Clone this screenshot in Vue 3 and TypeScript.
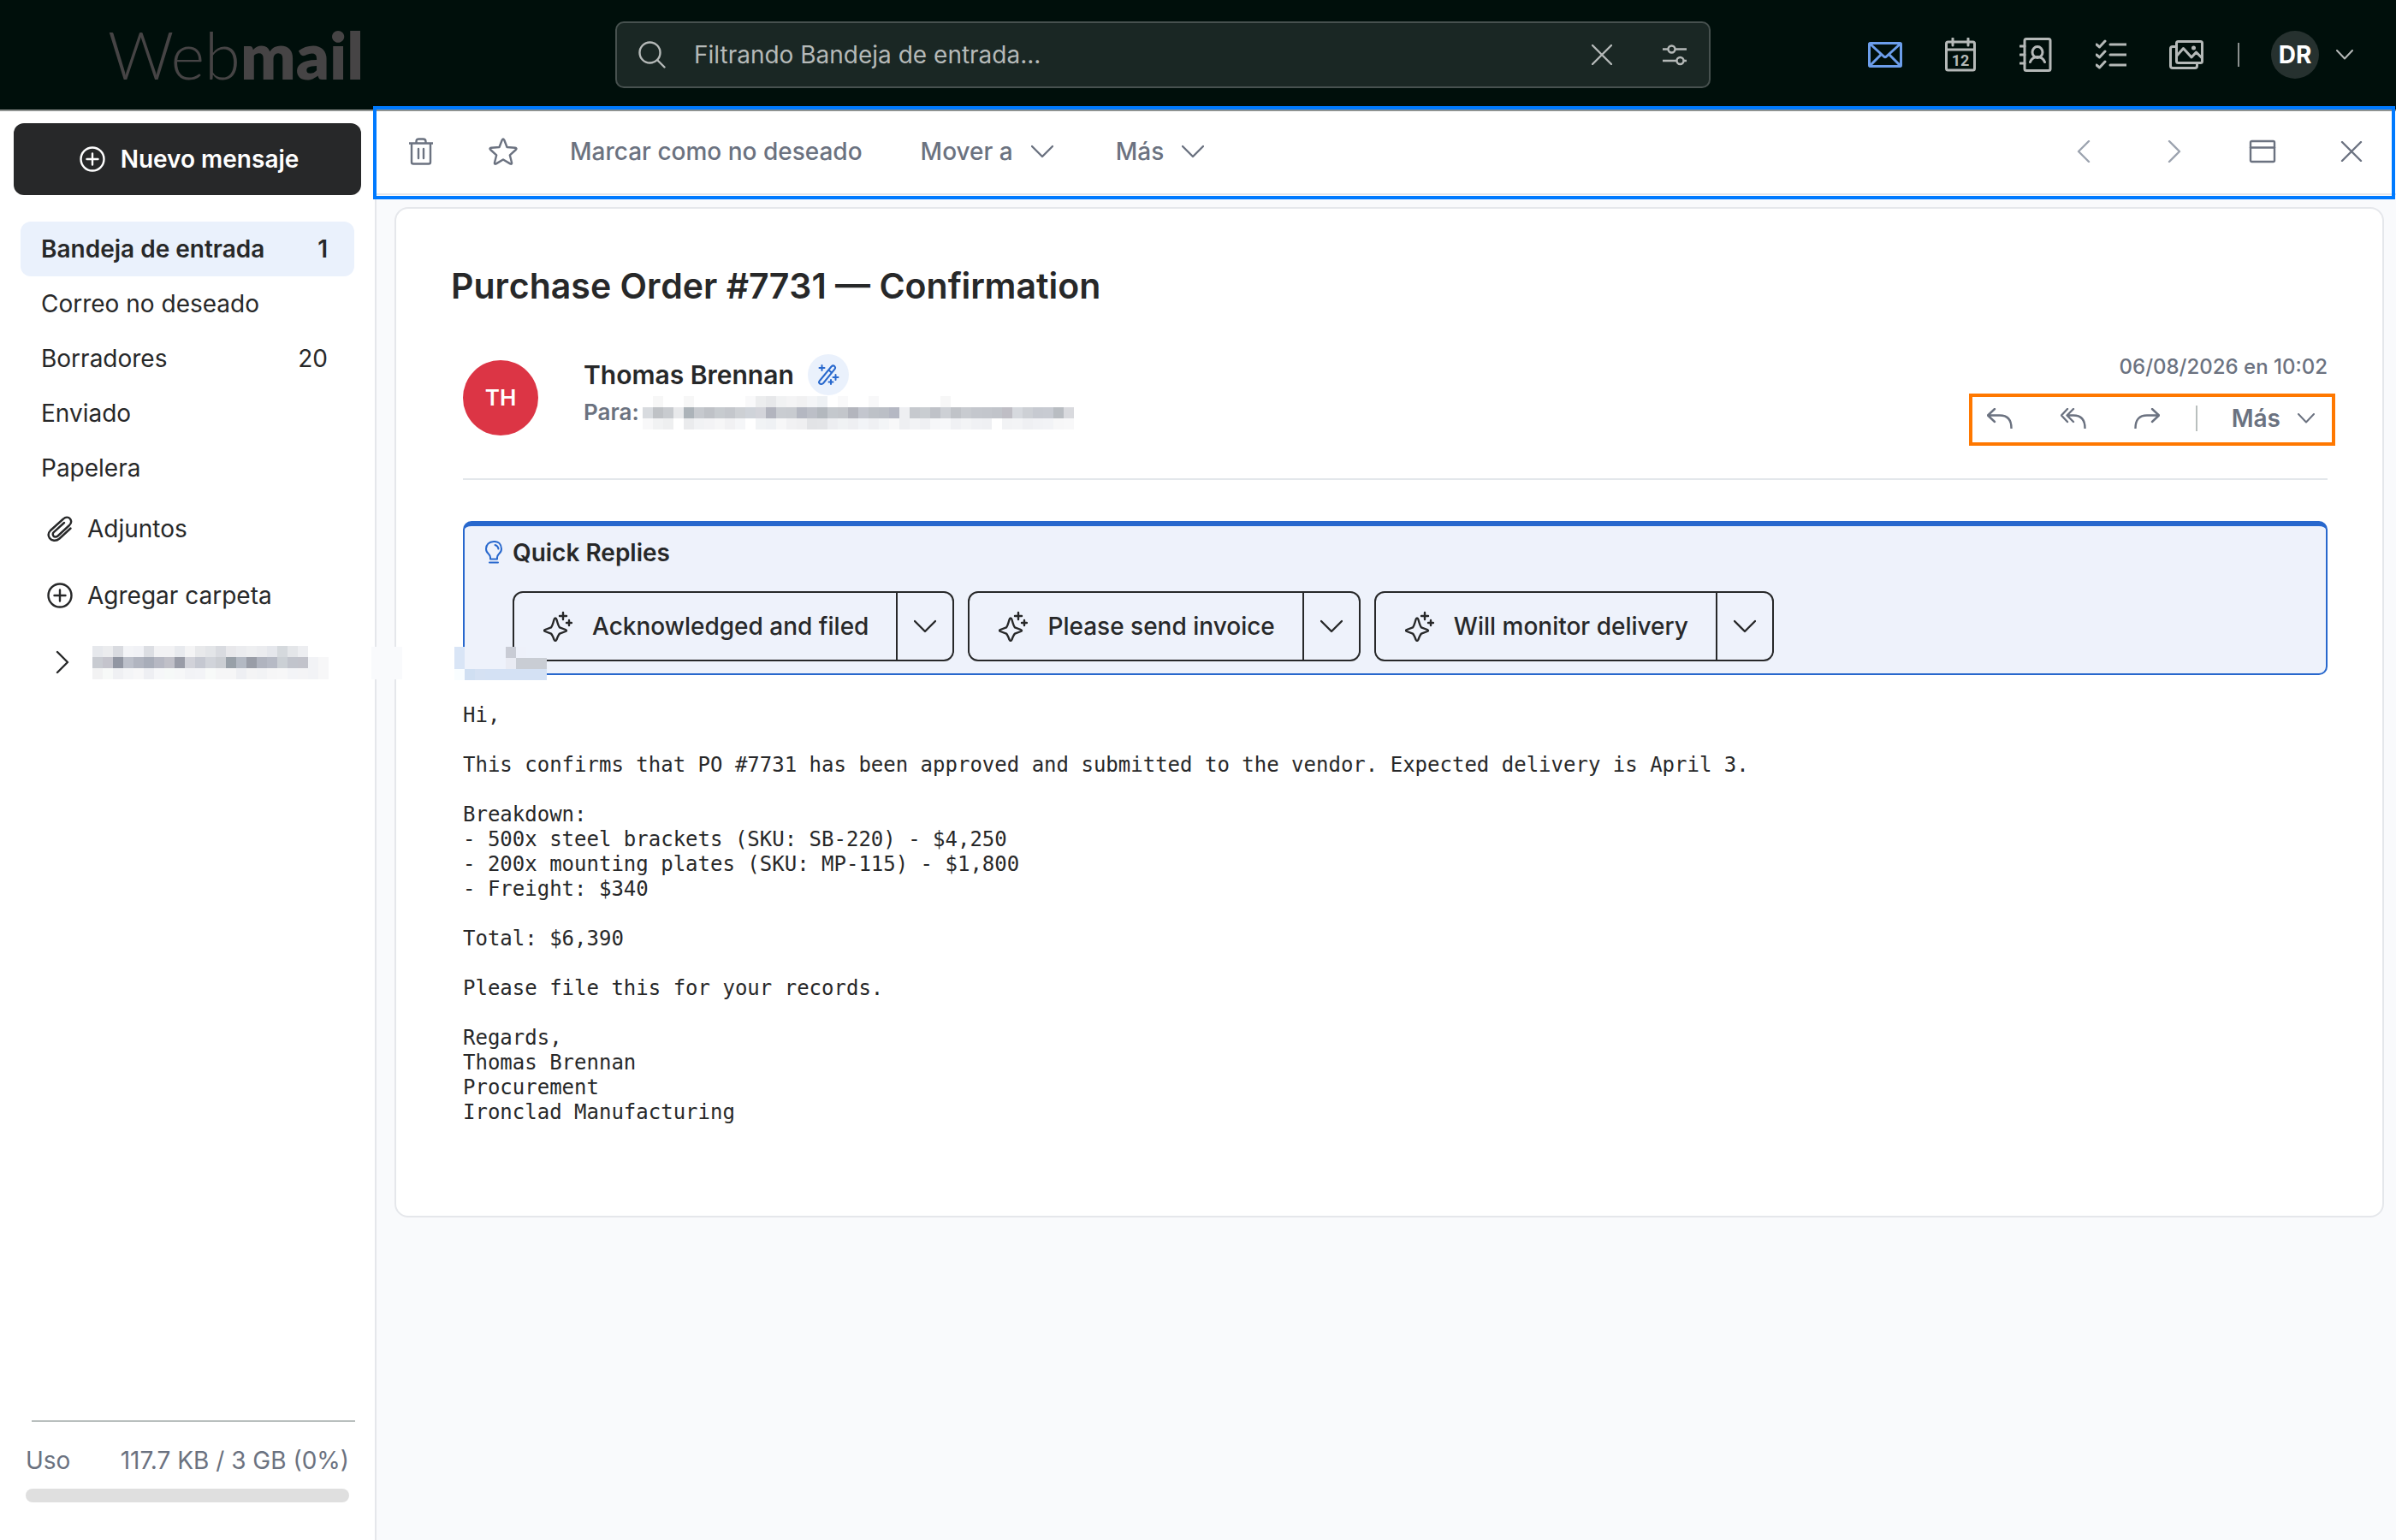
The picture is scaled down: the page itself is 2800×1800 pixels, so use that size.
<script setup lang="ts">
interface Folder {
  name: string
  count?: number
  active?: boolean
}

const folders: Folder[] = [
  { name: 'Bandeja de entrada', count: 1, active: true },
  { name: 'Correo no deseado' },
  { name: 'Borradores', count: 20 },
  { name: 'Enviado' },
  { name: 'Papelera' },
]

const quickReplies: string[] = ['Acknowledged and filed', 'Please send invoice', 'Will monitor delivery']

const message = `Hi,

This confirms that PO #7731 has been approved and submitted to the vendor. Expected delivery is April 3.

Breakdown:
- 500x steel brackets (SKU: SB-220) - $4,250
- 200x mounting plates (SKU: MP-115) - $1,800
- Freight: $340

Total: $6,390

Please file this for your records.

Regards,
Thomas Brennan
Procurement
Ironclad Manufacturing`

// Pixelated blocks that hide private addresses: one colour per 12px cell, row by row.
const accountMask: string[][] = [
  'e6e8ec ebecee d9dbe0 f3f4f7 f1f2f6 dcdee3 f2f2f4 f2f2f4 e8eaee f4f4f5 e8e9eb e3e5e8 d9dbe0 e8e8eb ebecef eeeff1 ebecef e5e7ec d5d9dd e4e6e9 edeef1 ffffff ffffff',
  'c8cbd1 c4c4cc 9196a2 bcc0ca b1b5c0 a8adb9 b6b8c3 c0c0c8 999ca7 d1d2d9 c5c8d1 d1d4da cbced3 98a0a8 b3b9c3 999da7 b0b4bf b6bac5 cbd0d5 c1c4cc c2c3cb f2f3f6 f7f7f8',
  'f2f2f3 f7f9f8 eff0f3 f4f5f7 f7f7f8 eeeff3 f6f7f9 f6f9f8 f6f7f8 f2f3f6 f3f4f7 f8faf9 f6f6f7 f6f6f7 eeeff3 f4f4f5 f2f3f5 f6f6f7 f7f7f8 f3f4f7 f4f4f6 f2f3f6 f7f7f8',
].map((row) => row.split(' '))

const recipientMask: string[][] = [
  'ffffff f7f7f7 ffffff ffffff f7f7f7 ffffff ffffff ffffff ffffff ffffff f9f9fa ecedee e7e8ea f1f2f3 f4f4f5 f1f1f2 f4f5f7 eef1f4 ffffff f9f9fa ffffff ffffff f8f8f9 ffffff ffffff ffffff ffffff ffffff ffffff f7f7f7 ffffff ffffff ffffff ffffff ffffff ffffff ffffff ffffff ffffff ffffff ffffff ffffff',
  'd8dbdf bfc2c6 c8cbcf e8e9eb acb3b9 c6c9ce bfc2c7 c7cbcf c4c7cc cdd0d4 cfd3d9 d3d4da b2b4be c9ccd1 c8cbd0 b4b7c1 bcbfc7 b3b8be c4c8cd c3c6cb b3b5bd c3c6ce bdc1c7 bbbfc6 b5b8c3 eeeff2 c6c9ce c9cdd1 bfc2c8 cdd0d5 c0c3c8 c8cbd0 c4c7cd c3c6cc c1c4ca bfbec5 d6d9de cdd0d5 c7cad1 c8cbd2 b9bdc2 d9dade',
  'f8f8f9 f1f2f3 eeeff0 ffffff eaebed f1f2f4 f3f3f5 f6f6f7 f1f1f3 f5f6f8 ffffff f1f3f5 eff1f4 f7f7f8 f1f1f3 efeff1 e2e3e6 e3e4e7 edeef1 f0f2f4 eeeff2 f2f4f7 eff0f3 f3f5f7 f8f8f9 eeeff2 f2f3f5 eff0f3 f6f7f9 f7f8fa f0f1f4 f3f4f6 f0f1f4 eff0f3 ffffff f2f3f5 f3f4f6 eff0f3 f1f2f5 f2f3f6 f7f7f8 f8f8f9',
].map((row) => row.split(' '))

const panelMask: string[][] = [
  'd9e5f6 eef2fb eef2fb eef2fb eef2fb c9ccd5 eef1fa eef2fb eef2fb',
  'd9e5f6 eef2fb eef2fb eef2fb eef2fb e9ebf3 c9cdd4 c9cdd4 c9cdd4',
  'f9fdff d0dff2 d5e1f3 d4e1f4 d4e1f4 d4e1f4 d4e1f4 d4e1f4 d4e1f4',
].map((row) => row.split(' '))
</script>

<template>
  <div class="app">
    <header class="topbar">
      <a class="brand" href="#">Web<b>mail</b></a>

      <form class="search" role="search" @submit.prevent>
        <svg class="stroke" width="32" height="32" viewBox="0 0 32 32" aria-hidden="true">
          <circle cx="13.5" cy="13.5" r="12" /><path d="M22 22l8.5 8.5" />
        </svg>
        <input type="search" aria-label="Buscar" placeholder="Filtrando Bandeja de entrada..." />
        <button type="button" aria-label="Borrar">
          <svg class="stroke" width="24" height="24" viewBox="0 0 24 24"><path d="M1 1l22 22M23 1L1 23" /></svg>
        </button>
        <button type="button" aria-label="Filtros">
          <svg class="stroke" width="28" height="28" viewBox="0 0 28 28">
            <path d="M0 7.500h6M15 7.500h13M0 21h16M25 21h3" /><circle cx="10.500" cy="7.500" r="4" /><circle cx="20.500" cy="21" r="4" />
          </svg>
        </button>
      </form>

      <nav class="apps" aria-label="Aplicaciones">
        <a href="#" class="app-link current" aria-label="Correo">
          <svg width="40" height="32" viewBox="0 0 40 32"><rect x="1.500" y="2.500" width="37" height="27" rx="1.500" /><path d="M2 3l16.500 15q1.500 1.400 3 0L38 3M2 29l13.500-13.500M38 29L24.500 15.500" /></svg>
        </a>
        <a href="#" class="app-link" aria-label="Calendario">
          <svg width="36" height="40" viewBox="0 0 36 40"><rect x="1.500" y="5" width="33" height="33" rx="2" /><path d="M1.500 14h33M9 1v8M27 1v8" /><text x="18" y="33" text-anchor="middle">12</text></svg>
        </a>
        <a href="#" class="app-link" aria-label="Contactos">
          <svg width="38" height="40" viewBox="0 0 38 40"><rect x="6" y="1.500" width="30" height="37" rx="2" /><path d="M1 10h5M1 20h5M1 30h5M12.500 28.500q2.500-6 8.500-6t8.500 6" /><ellipse cx="21" cy="17" rx="6" ry="6.500" /></svg>
        </a>
        <a href="#" class="app-link" aria-label="Tareas">
          <svg width="36" height="36" viewBox="0 0 36 36"><path d="M1 6l3.500 3L11 2M1 18l3.500 3L11 14M1 30l3.500 3L11 26M17 6h19M17 18h19M17 30h19" /></svg>
        </a>
        <a href="#" class="app-link" aria-label="Imágenes">
          <svg width="40" height="36" viewBox="0 0 40 36"><rect x="8.500" y="2.500" width="30" height="25" rx="2" /><path d="M8 8.500H4q-2.500 0-2.500 2.500v20q0 2.500 2.500 2.500h26q2.500 0 2.500-2.500v-3M9 19l7.500-8.500L26 21l5.500-6L38.500 22" /><circle class="dot" cx="28.500" cy="10" r="2.500" /></svg>
        </a>
        <span class="apps-rule"></span>
        <button type="button" class="account" aria-label="Cuenta">
          <span class="account-initials">DR</span>
          <svg class="stroke thin" width="20" height="12" viewBox="0 0 20 12"><path d="M1 1l9 9.500L19 1" /></svg>
        </button>
      </nav>
    </header>

    <div class="body">
      <aside class="sidebar">
        <button type="button" class="compose">
          <svg class="stroke" width="30" height="30" viewBox="0 0 30 30" aria-hidden="true"><circle cx="15" cy="15" r="13.500" /><path d="M15 8.500v13M8.500 15h13" /></svg>
          Nuevo mensaje
        </button>

        <nav class="folders" aria-label="Carpetas">
          <a v-for="folder in folders" :key="folder.name" href="#" class="folder" :class="{ active: folder.active }">
            <span>{{ folder.name }}</span><span v-if="folder.count">{{ folder.count }}</span>
          </a>
        </nav>

        <div class="extras">
          <a href="#" class="extra">
            <svg class="stroke" width="30" height="30" viewBox="0 0 30 30" aria-hidden="true"><path d="M27.500 14.500L14.500 26.500C10.500 30 5 29 3 26 1 23 1.500 19.500 4 17L19 3.500C21.500 1 25 1 27 3.500c1.800 2.500 1 5.500-1 7.500L12.500 23.500c-1.500 1.300-4 1.500-5 0s-.8-3.500.5-4.700L20 8" /></svg>
            Adjuntos
          </a>
          <button type="button" class="extra">
            <svg class="stroke" width="30" height="30" viewBox="0 0 30 30" aria-hidden="true"><circle cx="15" cy="15" r="13.500" /><path d="M15 8.500v13M8.500 15h13" /></svg>
            Agregar carpeta
          </button>
          <button type="button" class="extra" aria-label="Cuenta">
            <svg class="stroke" width="30" height="30" viewBox="0 0 30 30" aria-hidden="true"><path d="M12 3l12 12-12 12" /></svg>
            <span class="mask">
              <span v-for="(row, r) in accountMask" :key="r" class="mask-row">
                <i v-for="(c, k) in row" :key="k" :style="{ background: '#' + c }"></i>
              </span>
            </span>
          </button>
        </div>

        <div class="usage">
          <label class="usage-label" for="quota"><span>Uso</span><span>117.7 KB / 3 GB (0%)</span></label>
          <progress id="quota" max="100" value="0"></progress>
        </div>
        <span class="edge-mask"></span>
      </aside>

      <main class="main">
        <div class="toolbar" role="toolbar" aria-label="Acciones">
          <button type="button" class="tool trash" aria-label="Eliminar">
            <svg class="stroke" width="28" height="32" viewBox="0 0 28 32"><path d="M0 6.500h28M3 6.500v22q0 2 2 2h18q2 0 2-2v-22M8.500 6V4.500q0-3 3-3h5q3 0 3 3V6M11 13v11M17 13v11" /></svg>
          </button>
          <button type="button" class="tool star" aria-label="Destacar">
            <svg class="stroke" width="34" height="32" viewBox="0 0 34 32"><path d="M15.800 2.500q1.200-2 2.400 0L21.500 11l9.500.8q2.500.4.800 2.200l-7 6.300 2.200 8.700q.4 2.500-1.800 1.400L17 25.500l-8.200 4.900Q6.600 31.500 7 29l2.200-8.700L2.200 14q-1.700-1.800.8-2.200l9.500-.8z" /></svg>
          </button>
          <button type="button" class="tool junk">Marcar como no deseado</button>
          <button type="button" class="tool menu">
            Mover a
            <svg class="stroke" width="26" height="16" viewBox="0 0 26 16"><path d="M1 2l12 12L25 2" /></svg>
          </button>
          <button type="button" class="tool menu">
            Más
            <svg class="stroke" width="26" height="16" viewBox="0 0 26 16"><path d="M1 2l12 12L25 2" /></svg>
          </button>
          <div class="toolbar-end">
            <button type="button" class="tool muted" aria-label="Anterior">
              <svg class="stroke" width="32" height="26" viewBox="0 0 32 26"><path d="M21 1L9 13l12 12" /></svg>
            </button>
            <button type="button" class="tool muted" aria-label="Siguiente">
              <svg class="stroke" width="32" height="26" viewBox="0 0 32 26"><path d="M11 1l12 12-12 12" /></svg>
            </button>
            <button type="button" class="tool" aria-label="Abrir en ventana">
              <svg class="stroke" width="32" height="28" viewBox="0 0 32 28"><rect x="2" y="2" width="28" height="24" rx="1.500" /><path d="M2 9.500h28" /></svg>
            </button>
            <button type="button" class="tool" aria-label="Cerrar">
              <svg class="stroke" width="32" height="24" viewBox="0 0 32 24"><path d="M5 1l22 22M27 1L5 23" /></svg>
            </button>
          </div>
          <span class="toolbar-highlight"></span>
        </div>

        <article class="card">
          <h1>Purchase Order #7731 — Confirmation</h1>

          <div class="sender">
            <span class="avatar">TH</span>
            <div class="sender-info">
              <div class="sender-name">
                Thomas Brennan
                <span class="badge">
                  <svg class="stroke thin" width="26" height="24" viewBox="0 0 26 24"><path d="M2.500 19.500L16.500 2.500q2-2 3.800-.4 1.600 1.600 0 3.600L7 22q-2 1.800-4 .4-1.700-1.400-.5-2.900zM13.500 6.500l3.500 3.200M5.500 1v6M2.500 4h6M21.500 12v6M18.500 15h6M16 18v5M13.500 20.500h5" /></svg>
                </span>
              </div>
              <div class="recipient">
                Para:
                <span class="mask">
                  <span v-for="(row, r) in recipientMask" :key="r" class="mask-row">
                    <i v-for="(c, k) in row" :key="k" :style="{ background: '#' + c }"></i>
                  </span>
                </span>
              </div>
            </div>
            <div class="sender-side">
              <time datetime="2026-08-06T10:02">06/08/2026 en 10:02</time>
              <div class="reply-tools">
                <button type="button" class="reply" aria-label="Responder">
                  <svg class="stroke" width="30" height="24" viewBox="0 0 30 24"><path d="M9 1L1 8.500 9 16M1 8.500h14q13.500 0 13.500 15" /></svg>
                </button>
                <button type="button" class="reply" aria-label="Responder a todos">
                  <svg class="stroke" width="30" height="24" viewBox="0 0 30 24"><path d="M8 1L1 8.500 8 16M15 1L7.500 8.500 15 16M8 8.500h7q13.500 0 13.500 15" /></svg>
                </button>
                <button type="button" class="reply" aria-label="Reenviar">
                  <svg class="stroke" width="30" height="24" viewBox="0 0 30 24"><path d="M21 1l8 7.500-8 7.500M29 8.500H15Q1.500 8.500 1.500 23.500" /></svg>
                </button>
                <span class="reply-rule"></span>
                <button type="button" class="reply-more">
                  Más
                  <svg class="stroke thin" width="20" height="12" viewBox="0 0 20 12"><path d="M1 1l9 9.500L19 1" /></svg>
                </button>
              </div>
            </div>
          </div>

          <section class="quick">
            <h2>
              <svg class="stroke thin" width="20" height="28" viewBox="0 0 20 28" aria-hidden="true"><path d="M6 21.500v-2Q6 17.500 4 15.500 1 13 1 9.500 1.500 1.500 10 1t9 8.500q0 3.500-3 6-2 2-2 4v2zM11.500 5q3.500 1 4 4.500M5 25.500h10" /></svg>
              Quick Replies
            </h2>
            <div class="quick-list">
              <div v-for="reply in quickReplies" :key="reply" class="split">
                <button type="button" class="split-main">
                  <svg class="stroke" width="34" height="36" viewBox="0 0 34 36" aria-hidden="true"><path d="M14 8.500q1 0 1.500 1.800 2 7.500 3.500 9l7 2.700q2 1 0 2l-7 2.700q-1.500 1.500-3.500 6.800Q14 36.500 12.500 33.500q-2-5.300-3.500-6.800L2 24q-2-1 0-2l7-2.700q1.500-1.500 3.500-9 .5-1.800 1.500-1.800zM23 2v8M19 6h8M30 11v6M27 14h6" /></svg>
                  {{ reply }}
                </button>
                <button type="button" class="split-menu" :aria-label="'Opciones: ' + reply">
                  <svg class="stroke" width="26" height="16" viewBox="0 0 26 16"><path d="M1 2l12 12L25 2" /></svg>
                </button>
              </div>
            </div>
            <span class="mask panel-mask">
              <span v-for="(row, r) in panelMask" :key="r" class="mask-row">
                <i v-for="(c, k) in row" :key="k" :style="{ background: '#' + c }"></i>
              </span>
            </span>
          </section>

          <pre class="message">{{ message }}</pre>
        </article>
      </main>
    </div>
  </div>
</template>

<style>
body {
  margin: 0;
  background: #fff;
}
</style>

<style scoped>
.app {
  display: flex;
  flex-direction: column;
  min-height: 100vh;
  font-family: Inter, "Liberation Sans", sans-serif;
  font-size: 28px;
  line-height: 36px;
  color: #272829;
}
.app * {
  box-sizing: border-box;
}
button,
input {
  margin: 0;
  padding: 0;
  border: 0;
  background: none;
  font: inherit;
  color: inherit;
}
a {
  color: inherit;
  text-decoration: none;
}
svg {
  display: block;
  flex: none;
}
.stroke {
  fill: none;
  stroke: currentColor;
  stroke-width: 2.4;
  stroke-linecap: round;
  stroke-linejoin: round;
}
.stroke.thin {
  stroke-width: 2;
}

/* Top bar */
.topbar {
  display: flex;
  align-items: center;
  height: 130px;
  border-bottom: 2px solid #8f9391;
  background: #000f0b;
  color: #b5b9b8;
}
.brand {
  flex: 0 0 438px;
  padding-left: 126px;
  font-family: Lato, sans-serif;
  font-size: 76px;
  font-weight: 300;
  line-height: 80px;
  color: #464445;
  white-space: nowrap;
}
.brand b {
  font-weight: 800;
}
.search {
  display: flex;
  align-items: center;
  flex: 0 1 1280px;
  height: 78px;
  margin-left: 281px;
  padding: 0 26px 0 25px;
  border: 2px solid #47514f;
  border-radius: 10px;
  background: #1a2724;
}
.search input {
  flex: 1;
  min-width: 0;
  margin-left: 33px;
  outline: 0;
}
.search input::placeholder {
  color: #b5b9b8;
  opacity: 1;
}
.search button {
  margin-left: 59px;
}
.apps {
  display: flex;
  align-items: center;
  margin-left: auto;
  padding-right: 50px;
}
.app-link {
  display: flex;
  justify-content: center;
  width: 88px;
}
.app-link svg {
  fill: none;
  stroke: currentColor;
  stroke-width: 3;
  stroke-linecap: round;
  stroke-linejoin: round;
}
.app-link text {
  fill: currentColor;
  stroke: none;
  font-family: Roboto, sans-serif;
  font-size: 18px;
  font-weight: 700;
}
.app-link .dot {
  fill: currentColor;
  stroke: none;
}
.app-link.current {
  color: #6c9eeb;
}
.apps-rule {
  width: 2px;
  height: 28px;
  margin: 0 37px 0 16px;
  background: #8b908f;
}
.account {
  display: flex;
  align-items: center;
  gap: 20px;
}
.account-initials {
  display: grid;
  place-items: center;
  width: 56px;
  height: 56px;
  border-radius: 50%;
  background: #26312f;
  color: #fff;
  font-weight: 700;
}

/* Sidebar */
.body {
  display: flex;
  flex: 1;
}
.sidebar {
  position: relative;
  display: flex;
  flex-direction: column;
  flex: 0 0 440px;
  padding: 14px 16px 44px;
  border-right: 2px solid #e5e7eb;
  background: #fff;
}
.compose {
  display: flex;
  align-items: center;
  justify-content: center;
  gap: 18px;
  height: 84px;
  padding-left: 4px;
  border-radius: 12px;
  background: #272829;
  color: #fff;
  font-weight: 600;
}
.folders {
  margin: 31px 8px 0;
}
.folder {
  display: flex;
  align-items: center;
  justify-content: space-between;
  height: 64px;
  padding: 0 31px 0 24px;
  border-radius: 12px;
}
.folder.active {
  background: #eaf1fc;
  font-weight: 600;
}
.extras {
  display: flex;
  flex-direction: column;
  padding-left: 39px;
}
.extra {
  display: flex;
  align-items: center;
  gap: 17px;
  height: 78px;
}
.extra .mask {
  margin-left: 6px;
}
.usage {
  margin-top: auto;
  padding: 0 14px;
}
.usage::before {
  content: "";
  display: block;
  height: 2px;
  margin: 0 -7px 27px 7px;
  background: #b9bfbe;
}
.usage-label {
  display: flex;
  justify-content: space-between;
  color: #6b7280;
}
.usage progress {
  display: block;
  width: 100%;
  height: 16px;
  margin-top: 15px;
  border: 0;
  border-radius: 8px;
  background: #dfdfdf;
  appearance: none;
  overflow: hidden;
}
.usage progress::-webkit-progress-bar {
  background: #dfdfdf;
}

/* Pixelated masks */
.mask {
  display: flex;
  flex-direction: column;
}
.mask-row {
  display: flex;
}
.mask-row i {
  flex: none;
  width: 12px;
  height: 13px;
}
.edge-mask {
  position: absolute;
  top: 626px;
  left: 434px;
  z-index: 1;
  width: 36px;
  height: 38px;
  background: #f9fafc;
}
.panel-mask {
  position: absolute;
  top: 141px;
  left: -12px;
}

/* Main column */
.main {
  flex: 1;
  min-width: 0;
  background: #f9fafc;
}
.toolbar {
  position: relative;
  display: flex;
  align-items: center;
  height: 98px;
  padding: 0 36px 2px 38px;
  border-bottom: 2px solid #e5e7eb;
  background: #fff;
  color: #6b7280;
  font-weight: 500;
}
.star {
  margin-left: 65px;
}
.junk {
  margin-left: 61px;
}
.menu {
  display: flex;
  align-items: center;
  gap: 21px;
  margin-left: 68px;
}
.menu + .menu {
  margin-left: 73px;
}
.toolbar-end {
  display: flex;
  align-items: center;
  gap: 72px;
  margin-left: auto;
}
.muted {
  color: #9ca3af;
}
.toolbar-highlight {
  position: absolute;
  inset: -6px 1px -7px -4px;
  border: 4px solid #007aff;
  pointer-events: none;
}
.card {
  margin: 14px 14px 0 21px;
  padding: 64px 64px 106px 78px;
  border: 2px solid #e5e7eb;
  border-radius: 16px;
  background: #fff;
}
h1 {
  margin: 0 0 0 -14px;
  font-size: 41px;
  line-height: 52px;
  font-weight: 600;
  font-kerning: none;
}
.sender {
  display: flex;
  height: 201px;
  padding-top: 54px;
  border-bottom: 2px solid #e3e7eb;
}
.avatar {
  display: grid;
  place-items: center;
  width: 88px;
  height: 88px;
  margin-top: 7px;
  border-radius: 50%;
  background: #dc3545;
  color: #fff;
  font-size: 26px;
  font-weight: 600;
}
.sender-info {
  margin-left: 53px;
}
.sender-name {
  display: flex;
  align-items: center;
  gap: 16px;
  height: 48px;
  font-size: 30px;
  font-weight: 600;
}
.badge {
  display: grid;
  place-items: center;
  width: 48px;
  height: 48px;
  border-radius: 50%;
  background: #eaf1fc;
  color: #2868cd;
}
.recipient {
  display: flex;
  align-items: center;
  gap: 4px;
  height: 40px;
  color: #6b7280;
  font-size: 26px;
  font-weight: 600;
}
.sender-side {
  display: flex;
  flex-direction: column;
  align-items: flex-end;
  margin-left: auto;
  color: #6b7280;
}
time {
  margin-top: -3px;
  font-size: 24px;
  font-weight: 500;
}
.reply-tools {
  display: flex;
  align-items: center;
  height: 61px;
  margin: 13px -9px 0 0;
  padding: 0 20px 3px 17px;
  border: 4px solid #ff7800;
}
.reply {
  margin-right: 56px;
}
.reply-rule {
  width: 2px;
  height: 30px;
  margin: 0 40px 0 -14px;
  background: #b9bfbe;
}
.reply-more {
  display: flex;
  align-items: center;
  gap: 20px;
  font-weight: 600;
}

/* Quick replies */
.quick {
  position: relative;
  height: 180px;
  margin-top: 48px;
  padding: 13px 14px 0;
  border: 2px solid #2868cd;
  border-top-width: 6px;
  border-radius: 10px;
  background: #eef2fb;
}
h2 {
  display: flex;
  align-items: center;
  gap: 12px;
  margin: 0 0 0 10px;
  font-size: 28px;
  line-height: 36px;
  font-weight: 600;
}
h2 svg {
  color: #2868cd;
}
.quick-list {
  display: flex;
  gap: 16px;
  margin: 27px 0 0 42px;
}
.split {
  display: flex;
  height: 82px;
  border: 2px solid #272829;
  border-radius: 12px;
  font-weight: 500;
}
.split-main {
  display: flex;
  align-items: center;
  gap: 23px;
  padding: 0 32px 0 34px;
}
.split-menu {
  display: grid;
  place-items: center;
  width: 66px;
  border-left: 2px solid #272829;
}
.message {
  margin: 33px 0 0;
  font-family: "DejaVu Sans Mono", monospace;
  font-size: 24px;
  line-height: 29px;
  white-space: pre-wrap;
}
</style>
